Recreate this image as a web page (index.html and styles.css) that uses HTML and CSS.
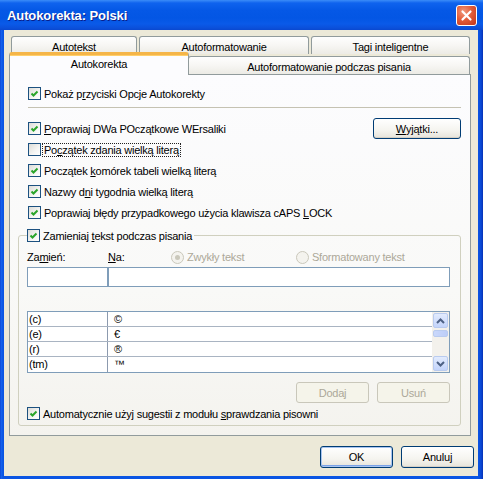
FILE: index.html
```html
<!DOCTYPE html>
<html lang="pl">
<head>
    <meta charset="UTF-8">
    <title>Autokorekta: Polski</title>
    <link rel="stylesheet" href="styles.css">
</head>
<body>
    <div class="window">
        <!-- Title bar -->
        <div class="titlebar">
            <span class="title">Autokorekta: Polski</span>
            <span class="close-btn">
                <svg width="19" height="19" viewBox="0 0 19 19"><path d="M5.5 5.5 L13.5 13.5 M13.5 5.5 L5.5 13.5" stroke="#fff" stroke-width="2.2" stroke-linecap="round"/></svg>
            </span>
        </div>

        <div class="client">
            <!-- Tabs -->
            <div class="tabs">
                <div class="tab-row back">
                    <div class="tab w-autotekst">Autotekst</div>
                    <div class="tab w-autoformat">Autoformatowanie</div>
                    <div class="tab w-tagi">Tagi inteligentne</div>
                </div>
                <div class="tab-row front">
                    <div class="tab selected w-autokorekta">Autokorekta</div>
                    <div class="tab w-podczas">Autoformatowanie podczas pisania</div>
                </div>
            </div>

            <!-- Tab page -->
            <div class="panel">
                <div class="check-row">
                    <span class="box"><svg width="11" height="11" viewBox="0 0 11 11"><path d="M2.5 5.5 L4.5 7.5 L8.5 3.5" fill="none" stroke="#2aa52a" stroke-width="2"/></svg></span>
                    <span>Pokaż p<u>r</u>zyciski Opcje Autokorekty</span>
                </div>

                <div class="separator"></div>

                <div class="check-row split">
                    <div class="check-inline">
                        <span class="box"><svg width="11" height="11" viewBox="0 0 11 11"><path d="M2.5 5.5 L4.5 7.5 L8.5 3.5" fill="none" stroke="#2aa52a" stroke-width="2"/></svg></span>
                        <span><u>P</u>oprawiaj DWa POczątkowe WErsaliki</span>
                    </div>
                    <button class="btn btn-exceptions"><u>W</u>yjątki...</button>
                </div>
                <div class="check-row">
                    <span class="box"></span>
                    <span class="focus">Po<u>c</u>zątek zdania wielką literą</span>
                </div>
                <div class="check-row">
                    <span class="box"><svg width="11" height="11" viewBox="0 0 11 11"><path d="M2.5 5.5 L4.5 7.5 L8.5 3.5" fill="none" stroke="#2aa52a" stroke-width="2"/></svg></span>
                    <span>Początek <u>k</u>omórek tabeli wielką literą</span>
                </div>
                <div class="check-row">
                    <span class="box"><svg width="11" height="11" viewBox="0 0 11 11"><path d="M2.5 5.5 L4.5 7.5 L8.5 3.5" fill="none" stroke="#2aa52a" stroke-width="2"/></svg></span>
                    <span>Nazwy d<u>n</u>i tygodnia wielką literą</span>
                </div>
                <div class="check-row">
                    <span class="box"><svg width="11" height="11" viewBox="0 0 11 11"><path d="M2.5 5.5 L4.5 7.5 L8.5 3.5" fill="none" stroke="#2aa52a" stroke-width="2"/></svg></span>
                    <span>Poprawiaj błędy przypadkowego użycia klawisza cAPS <u>L</u>OCK</span>
                </div>

                <!-- Replace-as-you-type group -->
                <fieldset class="group">
                    <legend class="check-row legend">
                        <span class="box"><svg width="11" height="11" viewBox="0 0 11 11"><path d="M2.5 5.5 L4.5 7.5 L8.5 3.5" fill="none" stroke="#2aa52a" stroke-width="2"/></svg></span>
                        <span>Zamieniaj <u>t</u>ekst podczas pisania</span>
                    </legend>

                    <div class="field-labels">
                        <span class="lbl-replace">Za<u>m</u>ień:</span>
                        <span class="lbl-with"><u>N</u>a:</span>
                        <span class="radio-item r-plain"><span class="radio checked"></span>Zwykły tekst</span>
                        <span class="radio-item"><span class="radio"></span>Sformatowany tekst</span>
                    </div>
                    <div class="field-inputs">
                        <div class="input in-replace"></div>
                        <div class="input in-with"></div>
                    </div>

                    <div class="list">
                        <div class="list-rows">
                            <div class="list-row"><span class="col-a">(c)</span><span class="col-b">©</span></div>
                            <div class="list-row"><span class="col-a">(e)</span><span class="col-b">€</span></div>
                            <div class="list-row"><span class="col-a">(r)</span><span class="col-b">®</span></div>
                            <div class="list-row"><span class="col-a">(tm)</span><span class="col-b">™</span></div>
                        </div>
                        <div class="scrollbar">
                            <span class="sb-btn"><svg width="9" height="6" viewBox="0 0 9 6"><path d="M1 5 L4.5 1.5 L8 5" fill="none" stroke="#4d6185" stroke-width="2"/></svg></span>
                            <span class="sb-thumb"></span>
                            <span class="sb-track"></span>
                            <span class="sb-btn"><svg width="9" height="6" viewBox="0 0 9 6"><path d="M1 1 L4.5 4.5 L8 1" fill="none" stroke="#4d6185" stroke-width="2"/></svg></span>
                        </div>
                    </div>

                    <div class="list-buttons">
                        <button class="btn disabled">Dodaj</button>
                        <button class="btn disabled">Usuń</button>
                    </div>

                    <div class="check-row flush">
                        <span class="box"><svg width="11" height="11" viewBox="0 0 11 11"><path d="M2.5 5.5 L4.5 7.5 L8.5 3.5" fill="none" stroke="#2aa52a" stroke-width="2"/></svg></span>
                        <span>Automatycznie użyj sugestii z modułu <u>s</u>prawdzania pisowni</span>
                    </div>
                </fieldset>
            </div>

            <div class="dialog-buttons">
                <button class="btn default">OK</button>
                <button class="btn">Anuluj</button>
            </div>
        </div>
    </div>
</body>
</html>
```

FILE: styles.css
```css
* {
    margin: 0;
    padding: 0;
    box-sizing: border-box;
}

body {
    font-family: "Liberation Sans", Arial, sans-serif;
    font-size: 11px;
    letter-spacing: -0.22px;
    color: #000;
    background: #0054e3;
}

u {
    text-decoration: underline;
    text-underline-offset: 1px;
}

/* Window frame */
.window {
    width: 483px;
    height: 479px;
    display: flex;
    flex-direction: column;
    background: linear-gradient(to right, #0a3ccd 0, #1664ee 1px, #0a55e3 3px, #0a55e3 478px, #0a48d6 481px, #0631b4 483px);
}

.titlebar {
    height: 30px;
    display: flex;
    align-items: center;
    justify-content: space-between;
    padding: 0 6px 0 7px;
    background: linear-gradient(to bottom, #3b8cf8 0, #0f63ee 3px, #0558e6 10px, #0356e4 18px, #0a5ae8 24px, #0b50da 28px, #0a48d0 30px);
}

.title {
    font-size: 13px;
    font-weight: bold;
    letter-spacing: -0.1px;
    color: #fff;
    text-shadow: 1px 1px 0 #0a1e8a;
}

.close-btn {
    width: 21px;
    height: 21px;
    display: flex;
    align-items: center;
    justify-content: center;
    border: 1px solid #fff;
    border-radius: 3px;
    background: radial-gradient(circle at 35% 30%, #f09a7e 0, #e35d3a 45%, #c2341a 100%);
}

.client {
    flex: 1;
    margin: 0 5px 3px 4px;
    background: #ece9d8;
    display: flex;
    flex-direction: column;
    padding-top: 6px;
}

/* Tabs */
.tabs {
    padding: 0 7px 0 5px;
}

.tab-row {
    display: flex;
}

.tab-row.back {
    gap: 2px;
    padding-left: 2px;
    height: 18px;
}

.tab-row.front {
    margin-top: -2px;
    height: 22px;
    align-items: flex-end;
    position: relative;
    z-index: 2;
}

.tab {
    height: 18px;
    display: flex;
    align-items: center;
    justify-content: center;
    padding-top: 2px;
    border: 1px solid #919b9c;
    border-bottom: none;
    border-radius: 3px 3px 0 0;
    background: linear-gradient(to bottom, #fefefe 0, #f7f6f3 50%, #ecebe5 100%);
    white-space: nowrap;
}

.w-autotekst { width: 126px; }
.w-autoformat { width: 170px; }
.w-tagi { width: 159px; }
.w-podczas { width: 282px; margin-left: -1px; }

.tab.selected {
    width: 180px;
    height: 23px;
    margin-bottom: -1px;
    background: #fcfcfe;
    border-top: 3px solid #f5b548;
    box-shadow: inset 0 1px 0 #ffcf6a;
    padding-top: 0;
    padding-bottom: 2px;
    position: relative;
    z-index: 3;
}

/* Tab page */
.panel {
    margin: 0 7px 0 5px;
    border: 1px solid #919b9c;
    background: linear-gradient(to bottom, #fcfcfe 0, #f9f9f7 60%, #f4f3ee 100%);
    padding: 8px 9px 9px 8px;
    display: flex;
    flex-direction: column;
}

.check-row {
    height: 21px;
    display: flex;
    align-items: center;
    gap: 3px;
    margin-left: 10px;
    white-space: nowrap;
}

.check-row.split {
    justify-content: space-between;
}

.check-inline {
    display: flex;
    align-items: center;
    gap: 3px;
}

.check-row.flush {
    margin-left: 0;
}

.box {
    width: 13px;
    height: 13px;
    flex: none;
    border: 1px solid #1c5180;
    background: linear-gradient(135deg, #dcdcd7 0, #f5f5f3 60%, #fff 100%);
    display: flex;
    align-items: center;
    justify-content: center;
}

.focus {
    outline: 1px dotted #222;
    padding: 0 1px;
    margin-left: -1px;
}

.separator {
    height: 1px;
    margin: 3px 0 10px 10px;
    background: #c5c2b2;
}

/* Buttons */
.btn {
    font-family: inherit;
    font-size: 11px;
    letter-spacing: -0.22px;
    color: #000;
    width: 73px;
    height: 21px;
    border: 1px solid #003c74;
    border-radius: 3px;
    background: linear-gradient(to bottom, #fff 0, #f5f4ef 60%, #e6e3da 100%);
    box-shadow: inset 0 -1px 0 #d6d0c5;
}

.btn-exceptions {
    width: 88px;
}

.btn.disabled {
    color: #aca899;
    border-color: #c9c7ba;
    background: #f5f4ea;
    box-shadow: none;
}

.btn.default {
    box-shadow: inset 0 0 0 1px #a8c4f0, inset 0 -2px 0 #7ba2e7;
}

/* Group box */
.group {
    margin-top: 2px;
    border: 1px solid #d0d0bf;
    border-radius: 3px;
    padding: 1px 10px 1px 8px;
}

.legend {
    margin-left: 0;
    padding: 0 2px 0 0;
}

.field-labels {
    height: 20px;
    display: flex;
    align-items: center;
}

.lbl-replace { width: 81px; }
.lbl-with { width: 63px; }

.radio-item {
    display: flex;
    align-items: center;
    gap: 3px;
    color: #aca899;
}

.r-plain { width: 125px; }

.radio {
    width: 13px;
    height: 13px;
    border: 1px solid #cac8bb;
    border-radius: 50%;
    background: #f4f3ee;
    display: flex;
    align-items: center;
    justify-content: center;
}

.radio.checked::after {
    content: '';
    width: 5px;
    height: 5px;
    border-radius: 50%;
    background: #cac8bb;
}

.field-inputs {
    display: flex;
    height: 20px;
}

.input {
    height: 20px;
    border: 1px solid #7f9db9;
    background: #fff;
}

.in-replace { width: 81px; }
.in-with { flex: 1; }

/* Replacement list */
.list {
    margin-top: 24px;
    height: 62px;
    border: 1px solid #7f9db9;
    background: #fff;
    display: flex;
}

.list-rows {
    flex: 1;
}

.list-row {
    height: 15px;
    display: flex;
    border-bottom: 1px solid #a9b4c2;
}

.list-row:last-child {
    border-bottom: none;
}

.col-a {
    width: 80px;
    border-right: 1px solid #8c9aae;
    padding-left: 1px;
    line-height: 15px;
}

.col-b {
    padding-left: 6px;
    line-height: 15px;
}

.scrollbar {
    width: 17px;
    background: #f3f1ec;
    display: flex;
    flex-direction: column;
    padding: 1px 0 1px 0;
}

.sb-btn {
    height: 15px;
    margin: 0 1px 0 1px;
    border: 1px solid #b9cbef;
    border-radius: 2px;
    background: linear-gradient(to bottom, #e2ebfd, #c3d4fb);
    display: flex;
    align-items: center;
    justify-content: center;
}

.sb-thumb {
    height: 7px;
    margin: 2px 1px 0 1px;
    border: 1px solid #b9cbef;
    border-radius: 2px;
    background: linear-gradient(to right, #cad8fb, #bccdf8);
}

.sb-track {
    flex: 1;
}

.list-buttons {
    display: flex;
    justify-content: flex-end;
    gap: 8px;
    margin-top: 9px;
}

/* Dialog buttons */
.dialog-buttons {
    display: flex;
    justify-content: flex-end;
    gap: 8px;
    margin: 10px 4px 0 0;
}

.dialog-buttons .btn {
    height: 22px;
}
```
